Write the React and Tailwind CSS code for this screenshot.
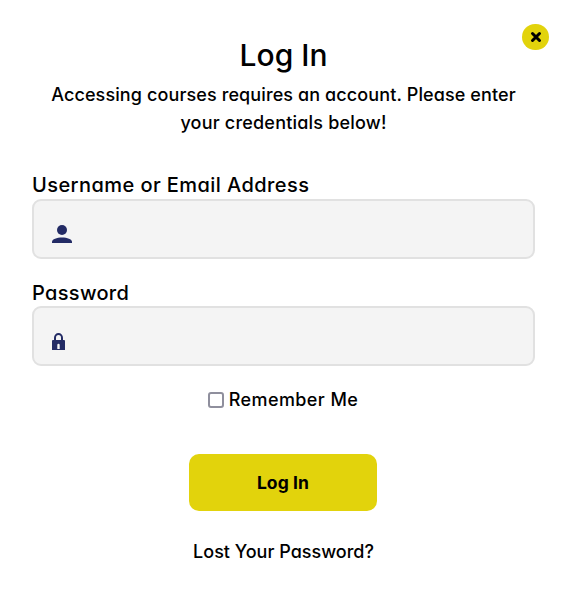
const FIELDS = [
  { id: "username", type: "text", label: "Username or Email Address", icon: UserIcon, labelClass: "leading-7 tracking-[0.43px]" },
  { id: "password", type: "password", label: "Password", icon: LockIcon, labelClass: "leading-[30px] tracking-[0.32px]" },
];

function UserIcon() {
  return (
    <svg width="20" height="18" viewBox="0 0 20 18" fill="#232B65">
      <circle cx="10" cy="5" r="5" />
      <path d="M0 18v-1c0-2.700 4.800-4.400 10-4.400S20 14.300 20 17v1z" />
    </svg>
  );
}

function LockIcon() {
  return (
    <svg width="13" height="17" viewBox="0 0 13 17" fill="none">
      <path d="M3 8V4.700a3.500 3.700 0 0 1 7 0V8" stroke="#232B65" strokeWidth="2" />
      <path fillRule="evenodd" fill="#232B65" d="M1 7h11a1 1 0 0 1 1 1v9H0V8a1 1 0 0 1 1-1zM6.500 10.800a1.200 1.200 0 0 0-1.200 1.200v4h2.400v-4a1.200 1.200 0 0 0-1.200-1.200z" />
    </svg>
  );
}

function Field({ id, type, label, icon: Icon, labelClass }) {
  return (
    <div>
      <label htmlFor={id} className={`block h-7 text-xl whitespace-nowrap ${labelClass}`}>
        {label}
      </label>
      <div className="flex h-[60px] items-end gap-3 rounded-[9px] border-2 border-[#E1E1E1] bg-[#F4F4F4] pb-[14px] pl-[18px] pr-4">
        <Icon />
        <input id={id} type={type} className="min-w-0 flex-1 bg-transparent text-base outline-none" />
      </div>
    </div>
  );
}

export default function App() {
  return (
    <main className="relative h-[595px] w-[566px] overflow-hidden bg-white px-8 pt-[34px] font-['Inter',sans-serif] font-medium text-black [font-feature-settings:'cv11']">
      <button
        type="button"
        aria-label="Close"
        className="absolute left-[522px] top-6 flex h-[26px] w-[27px] items-center justify-center rounded-full bg-[#E2D30C]"
      >
        <svg width="12" height="12" viewBox="0 0 12 12" fill="none" stroke="#000" strokeWidth="3" strokeLinecap="round">
          <path d="M2.500 2.500l7 7M9.500 2.500l-7 7" />
        </svg>
      </button>

      <header className="w-[503px] text-center">
        <h1 className="h-[47px] text-[30px] leading-[42px]">Log In</h1>
        <p className="text-lg leading-7 whitespace-nowrap">
          <span className="tracking-[0.11px]">Accessing courses requires an account. Please enter</span>
          <br />
          <span className="tracking-[0.2px]">your credentials below!</span>
        </p>
      </header>

      <form className="mt-[34px] w-[502px]" onSubmit={(e) => e.preventDefault()}>
        <div className="flex w-[503px] flex-col gap-[19px]">
          {FIELDS.map((field) => (
            <Field key={field.id} {...field} />
          ))}
        </div>

        <label className="mt-5 flex h-7 items-center justify-center gap-[5px] text-lg tracking-[0.4px]">
          <input type="checkbox" className="size-4 appearance-none rounded-[3px] border-2 border-[#8F8F9D] bg-white" />
          Remember Me
        </label>

        <button type="submit" className="mx-auto mt-10 block h-[57px] w-[188px] rounded-[10px] bg-[#E2D30C] pt-0.5 text-[17.500px] font-bold tracking-[0.1px]">
          Log In
        </button>
      </form>

      <div className="mt-[27px] w-[503px] text-center text-lg leading-7">
        <a href="#">Lost Your Password?</a>
      </div>
    </main>
  );
}
